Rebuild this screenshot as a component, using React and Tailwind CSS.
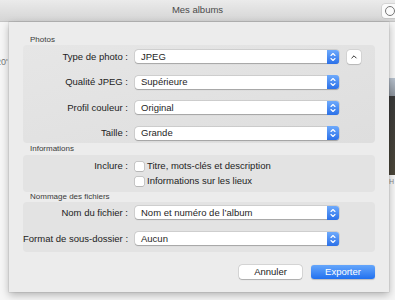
import React from 'react';

const FONT = { fontFamily: '"Liberation Sans", Arial, sans-serif' };

function Stepper() {
  return (
    <div className="w-[12px] h-[14px] -my-[0.5px] rounded-r-[3px] bg-gradient-to-b from-[#6eaafc] to-[#2b70e8] flex items-center justify-center">
      <svg width="12" height="14" viewBox="0 0 12 14" fill="none">
        <path d="M4 5.5 L6 3.5 L8 5.5" stroke="white" strokeWidth="1.1" strokeLinecap="round" strokeLinejoin="round" />
        <path d="M4 8.5 L6 10.5 L8 8.5" stroke="white" strokeWidth="1.1" strokeLinecap="round" strokeLinejoin="round" />
      </svg>
    </div>
  );
}

function Select({ value }) {
  return (
    <div className="w-[204px] h-[13px] flex items-center bg-white rounded-[3px] shadow-[0_0_0_0.5px_rgba(0,0,0,0.14),0_0.5px_1px_rgba(0,0,0,0.22)]">
      <span className="pl-[6px] text-[9.5px] text-[#1e1e1e] leading-none flex-1">{value}</span>
      <Stepper />
    </div>
  );
}

function Row({ label, value, extra }) {
  return (
    <div className="flex items-center h-[13px]">
      <span className="w-[105px] text-right text-[9.5px] text-[#222] whitespace-nowrap leading-none">{label}</span>
      <div className="ml-[7px]">
        <Select value={value} />
      </div>
      {extra && (
        <div className="ml-[8px] w-[14px] h-[14px] bg-white rounded-[3px] shadow-[0_0_0_0.5px_rgba(0,0,0,0.1),0_0.5px_1px_rgba(0,0,0,0.15)] flex items-center justify-center">
          <svg width="8" height="6" viewBox="0 0 8 6" fill="none">
            <path d="M1.8 4 L4 1.8 L6.2 4" stroke="#333" strokeWidth="1" strokeLinecap="round" strokeLinejoin="round" />
          </svg>
        </div>
      )}
    </div>
  );
}

function Check({ label }) {
  return (
    <div className="flex items-center h-[10px]">
      <span className="w-[9px] h-[9px] bg-white rounded-[1.5px] shadow-[0_0_0_0.5px_rgba(0,0,0,0.25),0_0.5px_0.5px_rgba(0,0,0,0.15)]" />
      <span className="ml-[3px] text-[9.5px] text-[#222] leading-none whitespace-nowrap">{label}</span>
    </div>
  );
}

function SectionLabel({ children, h }) {
  return (
    <div className={`${h} flex items-center pl-[7px] text-[8px] text-[#3a3a3a] leading-none`}>{children}</div>
  );
}

export default function App() {
  return (
    <div className="w-[395px] h-[300px] overflow-hidden bg-[#f6f6f6] flex flex-col" style={FONT}>
      {/* title bar */}
      <div className="h-[22px] shrink-0 grid grid-cols-[1fr_auto_1fr] items-center bg-gradient-to-b from-[#ebebeb] to-[#d5d5d5] border-b border-[#c4c4c4]">
        <div />
        <span className="text-[9.5px] text-[#4a4a4a]">Mes albums</span>
        <div className="flex justify-end">
          <div className="w-[14px] h-[14px] -mr-[1px] bg-[#fbfbfb] rounded-l-[3px] shadow-[0_0_0_0.5px_rgba(0,0,0,0.15)] flex items-center pl-[3px]">
            <span className="w-[10px] h-[10px] rounded-full border border-[#777] shrink-0" />
          </div>
        </div>
      </div>

      <div className="flex flex-1">
        {/* window content on the left */}
        <div className="w-[9px] shrink-0 overflow-hidden pt-[36px]">
          <span className="block -ml-[4px] text-[9px] text-[#777] leading-none whitespace-nowrap">20'</span>
        </div>

        {/* sheet */}
        <div className="w-[380px] h-[270px] shrink-0 bg-[#ececec] flex flex-col px-[14px] pt-[13px] pb-[13px] shadow-[0_3px_8px_rgba(0,0,0,0.28),0_0_0_0.5px_rgba(0,0,0,0.12)] z-10">
          <SectionLabel h="h-[10px]">Photos</SectionLabel>
          <div className="h-[98px] rounded-[4px] bg-gradient-to-br from-[#e6e6e6] to-[#dedede] pt-[5px] flex flex-col gap-[12.5px]">
            <Row label="Type de photo :" value="JPEG" extra />
            <Row label="Qualité JPEG :" value="Supérieure" />
            <Row label="Profil couleur :" value="Original" />
            <Row label="Taille :" value="Grande" />
          </div>

          <SectionLabel h="h-[12px]">Informations</SectionLabel>
          <div className="h-[37px] rounded-[4px] bg-[#e3e3e3] pt-[6px] flex flex-col gap-[5px]">
            <div className="flex items-center">
              <span className="w-[105px] text-right text-[9.5px] text-[#222] leading-none">Inclure :</span>
              <div className="ml-[7px]">
                <Check label="Titre, mots-clés et description" />
              </div>
            </div>
            <div className="flex items-center">
              <div className="ml-[112px]">
                <Check label="Informations sur les lieux" />
              </div>
            </div>
          </div>

          <SectionLabel h="h-[10px]">Nommage des fichiers</SectionLabel>
          <div className="h-[50px] rounded-[4px] bg-[#e3e3e3] pt-[4px] flex flex-col gap-[13px]">
            <Row label="Nom du fichier :" value="Nom et numéro de l’album" />
            <Row label="Format de sous-dossier :" value="Aucun" />
          </div>

          <div className="mt-[13px] flex justify-end gap-[9px]">
            <button className="w-[63px] h-[14px] bg-white rounded-[3px] text-[9.5px] text-[#222] leading-none shadow-[0_0_0_0.5px_rgba(0,0,0,0.16),0_0.5px_1px_rgba(0,0,0,0.2)]">
              Annuler
            </button>
            <button className="w-[64px] h-[14px] rounded-[3px] text-[9.5px] text-white leading-none bg-gradient-to-b from-[#65a6fb] to-[#1f70ef] shadow-[0_0.5px_1px_rgba(0,0,0,0.2)]">
              Exporter
            </button>
          </div>
        </div>

        {/* window content on the right */}
        <div className="w-[6px] shrink-0 flex flex-col pt-[56px]">
          <div className="h-[97px] flex flex-col">
            <div className="h-[18px] bg-gradient-to-b from-[#b9c3cf] to-[#8c939c]" />
            <div className="flex-1 bg-gradient-to-b from-[#3a3a3a] to-[#4b4639]" />
          </div>
          <span className="mt-[3px] text-[7px] text-[#888] leading-none">H</span>
        </div>
      </div>
    </div>
  );
}
